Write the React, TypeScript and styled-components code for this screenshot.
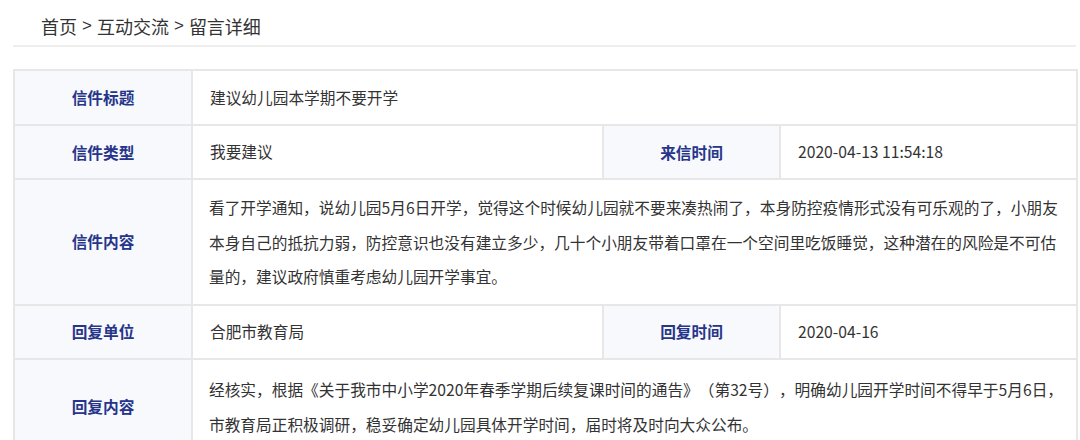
import styled, { createGlobalStyle } from 'styled-components';

const GlobalStyle = createGlobalStyle`
  body {
    margin: 0;
    background: #fff;
    font-family: 'Noto Sans CJK SC', 'Noto Sans', sans-serif;
    color: #333;
    text-spacing-trim: space-all;
  }
`;

const letter = {
  title: '建议幼儿园本学期不要开学',
  type: '我要建议',
  time: '2020-04-13 11:54:18',
  content:
    '看了开学通知，说幼儿园5月6日开学，觉得这个时候幼儿园就不要来凑热闹了，本身防控疫情形式没有可乐观的了，小朋友本身自己的抵抗力弱，防控意识也没有建立多少，几十个小朋友带着口罩在一个空间里吃饭睡觉，这种潜在的风险是不可估量的，建议政府慎重考虑幼儿园开学事宜。',
  replyUnit: '合肥市教育局',
  replyTime: '2020-04-16',
  reply:
    '经核实，根据《关于我市中小学2020年春季学期后续复课时间的通告》（第32号），明确幼儿园开学时间不得早于5月6日，市教育局正积极调研，稳妥确定幼儿园具体开学时间，届时将及时向大众公布。',
};

const App = () => {
  return (
    <Page>
      <GlobalStyle />
      <Crumbs>
        <span>首页</span>
        <Sep>&gt;</Sep>
        <span>互动交流</span>
        <Sep>&gt;</Sep>
        <span>留言详细</span>
      </Crumbs>
      <Divider />
      <Table>
        <colgroup>
          <col style={{ width: 178 }} />
          <col style={{ width: 411 }} />
          <col style={{ width: 177 }} />
          <col style={{ width: 297 }} />
        </colgroup>
        <tbody>
          <Row height={55}>
            <Label>信件标题</Label>
            <Value colSpan={3}>{letter.title}</Value>
          </Row>
          <Row height={54}>
            <Label>信件类型</Label>
            <Value>{letter.type}</Value>
            <Label>来信时间</Label>
            <Value>{letter.time}</Value>
          </Row>
          <Row height={123}>
            <Label>信件内容</Label>
            <Value colSpan={3} multiline>
              {letter.content}
            </Value>
          </Row>
          <Row height={54}>
            <Label>回复单位</Label>
            <Value>{letter.replyUnit}</Value>
            <Label>回复时间</Label>
            <Value>{letter.replyTime}</Value>
          </Row>
          <Row height={96}>
            <Label>回复内容</Label>
            <Value colSpan={3} multiline>
              {letter.reply}
            </Value>
          </Row>
        </tbody>
      </Table>
    </Page>
  );
};

export default App;

const Page = styled.div`
  width: 1080px;
  padding: 0 0 0 13px;
  box-sizing: border-box;
`;

const Crumbs = styled.div`
  display: flex;
  align-items: center;
  height: 18px;
  padding: 17px 0 0 28px;
  font-size: 18px;
  line-height: 18px;
  color: #333;
`;

const Sep = styled.span`
  margin: 0 5px;
  font-family: 'Liberation Sans', sans-serif;
  font-size: 17px;
`;

const Divider = styled.div`
  width: 1063px;
  height: 2px;
  margin-top: 10px;
  background: #eeeeee;
`;

const Table = styled.table`
  width: 1063px;
  margin-top: 22px;
  border-collapse: collapse;
  table-layout: fixed;
  font-size: 15.7px;
`;

const Row = styled.tr<{ height: number }>`
  height: ${({ height }) => height}px;
`;

const Label = styled.th`
  border: 2px solid #e7e7e7;
  background: #f7f9fc;
  color: #26358a;
  font-weight: 700;
  text-align: center;
  vertical-align: middle;
  padding: 0;
`;

const Value = styled.td<{ multiline?: boolean }>`
  border: 2px solid #e7e7e7;
  color: #333;
  text-align: left;
  vertical-align: middle;
  padding: ${({ multiline }) => (multiline ? '11px 10px 9px 16px' : '0 10px 0 17px')};
  line-height: ${({ multiline }) => (multiline ? '34.5px' : '20px')};
`;
